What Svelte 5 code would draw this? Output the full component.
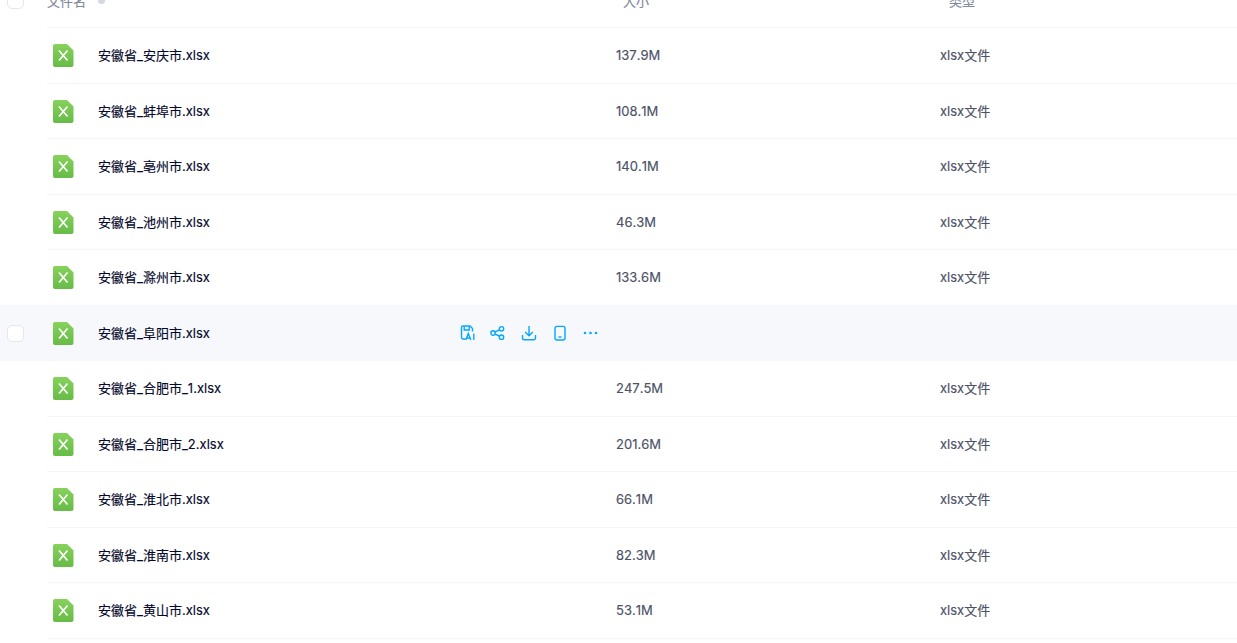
<script>
	const files = [
		{ name: '安徽省_安庆市.xlsx', size: '137.9M' },
		{ name: '安徽省_蚌埠市.xlsx', size: '108.1M' },
		{ name: '安徽省_亳州市.xlsx', size: '140.1M' },
		{ name: '安徽省_池州市.xlsx', size: '46.3M' },
		{ name: '安徽省_滁州市.xlsx', size: '133.6M' },
		{ name: '安徽省_阜阳市.xlsx', size: '', hover: true },
		{ name: '安徽省_合肥市_1.xlsx', size: '247.5M' },
		{ name: '安徽省_合肥市_2.xlsx', size: '201.6M' },
		{ name: '安徽省_淮北市.xlsx', size: '66.1M' },
		{ name: '安徽省_淮南市.xlsx', size: '82.3M' },
		{ name: '安徽省_黄山市.xlsx', size: '53.1M' }
	];
</script>

<div class="list">
	<div class="head">
		<span class="check"></span>
		<span class="h-name">文件名<i class="sort"></i></span>
		<span class="h-size">大小</span>
		<span class="h-type">类型</span>
	</div>
	{#each files as file}
		<div class="row" class:hover={file.hover}>
			<span class="check"></span>
			<svg class="file-icon" viewBox="0 0 21 23" width="21" height="23">
				<defs>
					<linearGradient id="xl" x1="0" y1="0" x2="0" y2="1">
						<stop offset="0" stop-color="#86d25c" />
						<stop offset="1" stop-color="#67bb47" />
					</linearGradient>
				</defs>
				<path d="M2 0H14L20.5 6.5V21a2 2 0 0 1-2 2H2a2 2 0 0 1-2-2V2a2 2 0 0 1 2-2Z" fill="url(#xl)" />
				<path d="M6 6.5 14.5 16.5M14.5 6.5 6 16.5" stroke="#fff" stroke-width="1.7" fill="none" />
			</svg>
			<span class="name">{file.name}</span>
			{#if file.hover}
				<div class="actions">
					<svg viewBox="0 0 16 16"><path d="M6.5 14H4a1.5 1.5 0 0 1-1.5-1.5v-10A1.5 1.5 0 0 1 4 1h7l2.5 2.5V6.5" /><path d="M5.2 1.5V5h5V1.5" /><path d="M6.8 15 9.3 8.5 11.8 15M7.8 13h3M14.8 8.5V15" /></svg>
					<svg viewBox="0 0 16 16"><circle cx="3" cy="8" r="2.2" /><circle cx="11.5" cy="3.8" r="2.2" /><circle cx="11.5" cy="12.2" r="2.2" /><path d="M5 7 9.5 4.8M5 9 9.5 11.2" /></svg>
					<svg viewBox="0 0 16 16"><path d="M8 1v9.5M4.2 7 8 10.8 11.8 7" /><path d="M1.5 10v3a1.8 1.8 0 0 0 1.8 1.8h9.4a1.8 1.8 0 0 0 1.8-1.8v-3" /></svg>
					<svg viewBox="0 0 16 16"><rect x="3" y="1.4" width="10" height="13.6" rx="2" /><path d="M6.5 12h3" /></svg>
					<svg viewBox="0 0 16 16" class="more"><circle cx="2" cy="8" r="1.3" /><circle cx="7.5" cy="8" r="1.3" /><circle cx="13" cy="8" r="1.3" /></svg>
				</div>
			{/if}
			<span class="size">{file.size}</span>
			<span class="type">{file.hover ? '' : 'xlsx文件'}</span>
		</div>
	{/each}
</div>

<style>
	:global(body) {
		background: #fff;
		overflow: hidden;
		min-height: 100vh;
	}
	.list {
		margin-top: -27.6px;
		font-family: Inter, 'Noto Sans CJK SC', sans-serif;
		font-size: 13px;
		font-kerning: none;
	}
	.head,
	.row {
		display: flex;
		align-items: center;
		height: 55.5px;
		position: relative;
	}
	.head::after,
	.row::after {
		content: '';
		position: absolute;
		left: 47px;
		right: 0;
		bottom: -0.5px;
		height: 1px;
		background: #f4f5f7;
	}
	.row.hover {
		background: #f7f8fc;
	}
	.row.hover::after {
		display: none;
	}
	.check {
		flex: none;
		box-sizing: border-box;
		width: 17px;
		height: 17px;
		margin-left: 7px;
		background: #fff;
		border: 1px solid #e4e6ec;
		border-radius: 5px;
		visibility: hidden;
	}
	.head .check,
	.row.hover .check {
		visibility: visible;
	}
	.head {
		color: #828a9b;
		-webkit-text-stroke: 0.15px #828a9b;
	}
	.h-name {
		width: 576px;
		margin-left: 23px;
		display: flex;
		align-items: center;
	}
	.sort {
		width: 7px;
		height: 7px;
		margin-left: 12px;
		border-radius: 50%;
		background: #d5d8e0;
	}
	.h-size {
		width: 326px;
	}
	.file-icon {
		flex: none;
		margin-left: 29px;
	}
	.name {
		width: 340px;
		flex: none;
		margin-left: 24px;
		padding-bottom: 1.5px;
		color: #05082c;
		white-space: nowrap;
		-webkit-text-stroke: 0.15px #05082c;
	}
	.actions {
		position: absolute;
		left: 459px;
		top: 50%;
		transform: translateY(-50%);
		display: flex;
		gap: 15px;
	}
	.actions svg {
		width: 16px;
		height: 16px;
		fill: none;
		stroke: #06a7ff;
		stroke-width: 1.4;
	}
	.actions svg.more {
		fill: #06a7ff;
		stroke: none;
	}
	.size {
		width: 324px;
		flex: none;
		margin-left: 178px;
		padding-bottom: 0.5px;
		color: #4b5166;
		-webkit-text-stroke: 0.15px #4b5166;
	}
	.type {
		padding-bottom: 1.5px;
		color: #4b5166;
		-webkit-text-stroke: 0.15px #4b5166;
	}
</style>
